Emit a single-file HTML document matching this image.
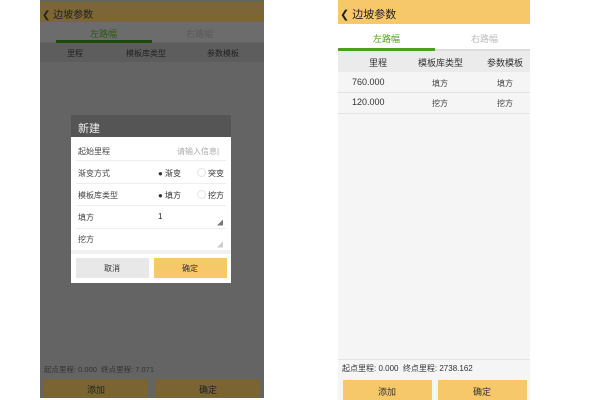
<!DOCTYPE html>
<html><head><meta charset="utf-8"><style>
*{margin:0;padding:0;box-sizing:border-box}
body{width:600px;height:400px;background:#fff;position:relative;overflow:hidden;font-family:"Liberation Sans","Noto Sans CJK SC",sans-serif}
.a{position:absolute}
.t{position:absolute;white-space:nowrap}
</style></head><body>
<!-- left phone -->
<div class="a" style="left:40px;top:0;width:224px;height:398px;background:#646464"></div>
<div class="a" style="left:40px;top:2px;width:224px;height:20px;background:#7c6636"></div>
<div class="t" style="left:42px;top:6px;font-size:10px;color:#222">&#10094; 边坡参数</div>
<div class="a" style="left:40px;top:22px;width:224px;height:20px;background:#6c6c6c"></div>
<div class="t" style="left:90px;top:27px;font-size:9px;color:#2e5a14">左路幅</div>
<div class="t" style="left:186px;top:27px;font-size:9px;color:#5a5a5a">右路幅</div>
<div class="a" style="left:56px;top:40px;width:96px;height:3px;background:#1f4a0c"></div>
<div class="a" style="left:40px;top:43px;width:224px;height:19px;background:#5d5d5d"></div>
<div class="t" style="left:67px;top:48px;font-size:8px;color:#222">里程</div>
<div class="t" style="left:126px;top:48px;font-size:8px;color:#222">模板库类型</div>
<div class="t" style="left:207px;top:48px;font-size:8px;color:#222">参数模板</div>
<!-- dialog -->
<div class="a" style="left:71px;top:115px;width:160px;height:168px;background:#fff"></div>
<div class="a" style="left:71px;top:115px;width:160px;height:22px;background:#555"></div>
<div class="t" style="left:78px;top:120px;font-size:11px;color:#eee">新建</div>
<div class="t" style="left:78px;top:146px;font-size:8px;color:#444">起始里程</div>
<div class="t" style="left:177px;top:146px;font-size:8px;color:#aaa">请输入信息|</div>
<div class="a" style="left:76px;top:160px;width:150px;height:1px;background:#eee"></div>
<div class="t" style="left:78px;top:168px;font-size:8px;color:#444">渐变方式</div>
<div class="t" style="left:158px;top:168px;font-size:8px;color:#333">●&nbsp;渐变</div>
<div class="a" style="left:197px;top:168px;width:9px;height:9px;border:1px solid #e4e4e4;border-radius:50%"></div>
<div class="t" style="left:208px;top:168px;font-size:8px;color:#333">突变</div>
<div class="a" style="left:76px;top:183px;width:150px;height:1px;background:#eee"></div>
<div class="t" style="left:78px;top:190px;font-size:8px;color:#444">模板库类型</div>
<div class="t" style="left:158px;top:190px;font-size:8px;color:#333">●&nbsp;填方</div>
<div class="a" style="left:197px;top:190px;width:9px;height:9px;border:1px solid #e4e4e4;border-radius:50%"></div>
<div class="t" style="left:208px;top:190px;font-size:8px;color:#333">挖方</div>
<div class="a" style="left:76px;top:205px;width:150px;height:1px;background:#eee"></div>
<div class="t" style="left:78px;top:212px;font-size:8px;color:#444">填方</div>
<div class="t" style="left:158px;top:212px;font-size:8px;color:#222">1</div>
<div class="t" style="left:217px;top:218px;font-size:6px;color:#777">◢</div>
<div class="a" style="left:76px;top:228px;width:150px;height:1px;background:#eee"></div>
<div class="t" style="left:78px;top:234px;font-size:8px;color:#444">挖方</div>
<div class="t" style="left:217px;top:240px;font-size:6px;color:#ccc">◢</div>
<div class="a" style="left:71px;top:250px;width:160px;height:4px;background:#f0f0f0"></div>
<div class="a" style="left:76px;top:258px;width:73px;height:20px;background:#e8e8e8"></div>
<div class="t" style="left:104px;top:263px;font-size:8px;color:#333">取消</div>
<div class="a" style="left:154px;top:258px;width:73px;height:20px;background:#f6c869"></div>
<div class="t" style="left:182px;top:263px;font-size:8px;color:#333">确定</div>
<div class="t" style="left:44px;top:364px;font-size:7.5px;color:#333">起点里程: 0.000 &nbsp;终点里程: 7.071</div>
<div class="a" style="left:43px;top:379px;width:105px;height:19px;background:#7a6433"></div>
<div class="t" style="left:87px;top:383px;font-size:9px;color:#222">添加</div>
<div class="a" style="left:155px;top:379px;width:105px;height:19px;background:#7a6433"></div>
<div class="t" style="left:199px;top:383px;font-size:9px;color:#222">确定</div>
<!-- right phone -->
<div class="a" style="left:338px;top:0;width:192px;height:400px;background:#f5f5f5"></div>
<div class="a" style="left:338px;top:0;width:192px;height:24px;background:#f6c869"></div>
<div class="t" style="left:340px;top:6px;font-size:11px;color:#222">&#10094; 边坡参数</div>
<div class="a" style="left:338px;top:24px;width:192px;height:26px;background:#fff"></div>
<div class="t" style="left:373px;top:32px;font-size:9px;color:#4aa020">左路幅</div>
<div class="t" style="left:471px;top:32px;font-size:9px;color:#bbb">右路幅</div>
<div class="a" style="left:338px;top:48px;width:97px;height:3px;background:#4aa020"></div>
<div class="a" style="left:435px;top:49px;width:95px;height:2px;background:#ddd"></div>
<div class="a" style="left:338px;top:51px;width:192px;height:21px;background:#ebebeb"></div>
<div class="t" style="left:369px;top:56px;font-size:9px;color:#333">里程</div>
<div class="t" style="left:418px;top:56px;font-size:9px;color:#333">模板库类型</div>
<div class="t" style="left:487px;top:56px;font-size:9px;color:#333">参数模板</div>
<div class="t" style="left:352px;top:77px;font-size:9px;color:#333">760.000</div>
<div class="t" style="left:432px;top:78px;font-size:8px;color:#444">填方</div>
<div class="t" style="left:497px;top:78px;font-size:8px;color:#444">填方</div>
<div class="a" style="left:338px;top:92px;width:192px;height:1px;background:#e4e4e4"></div>
<div class="t" style="left:352px;top:97px;font-size:9px;color:#333">120.000</div>
<div class="t" style="left:432px;top:98px;font-size:8px;color:#444">挖方</div>
<div class="t" style="left:497px;top:98px;font-size:8px;color:#444">挖方</div>
<div class="a" style="left:338px;top:113px;width:192px;height:1px;background:#e4e4e4"></div>
<div class="a" style="left:338px;top:359px;width:192px;height:1px;background:#e4e4e4"></div>
<div class="t" style="left:342px;top:363px;font-size:8px;color:#333">起点里程: 0.000 &nbsp;终点里程: 2738.162</div>
<div class="a" style="left:343px;top:380px;width:89px;height:20px;background:#f6c869"></div>
<div class="t" style="left:378px;top:385px;font-size:9px;color:#333">添加</div>
<div class="a" style="left:438px;top:380px;width:89px;height:20px;background:#f6c869"></div>
<div class="t" style="left:473px;top:385px;font-size:9px;color:#333">确定</div>
</body></html>
